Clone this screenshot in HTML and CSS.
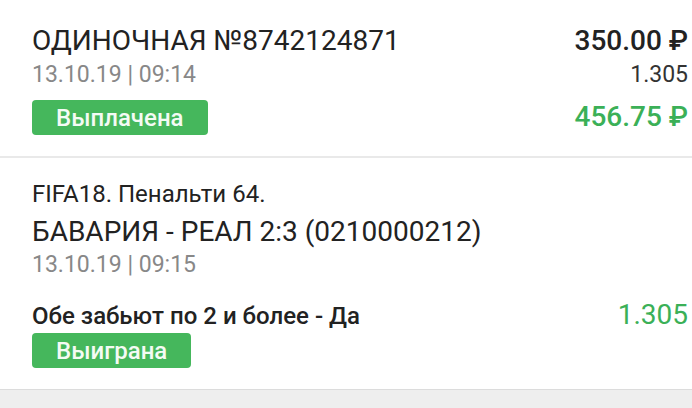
FILE: index.html
```html
<!DOCTYPE html>
<html lang="ru">
<head>
  <meta charset="UTF-8" />
  <meta name="viewport" content="width=device-width, initial-scale=1.0" />
  <title>Ставка</title>
  <link rel="stylesheet" href="styles.css">
</head>
<body>
  <div class="bet-card">
    <div class="bet-head">
      <div class="bet-title">ОДИНОЧНАЯ №8742124871</div>
      <div class="bet-amount">350.00 ₽</div>
      <div class="bet-date">13.10.19 | 09:14</div>
      <div class="bet-coef">1.305</div>
      <div class="status-wrap"><span class="status">Выплачена</span></div>
      <div class="bet-win">456.75 ₽</div>
    </div>
  </div>

  <div class="event-card">
    <div class="event-league">FIFA18. Пенальти 64.</div>
    <div class="event-match">БАВАРИЯ - РЕАЛ 2:3 (0210000212)</div>
    <div class="event-date">13.10.19 | 09:15</div>
    <div class="event-row">
      <div class="event-outcome">Обе забьют по 2 и более - Да</div>
      <div class="event-coef">1.305</div>
    </div>
    <span class="status">Выиграна</span>
  </div>
</body>
</html>
```

FILE: styles.css
```css
* {
  box-sizing: border-box;
}

body {
  margin: 0;
  font-family: Roboto, "Noto Sans", sans-serif;
  background: #eeeeee;
  color: #222;
}

.bet-card,
.event-card {
  background: #fff;
  padding: 0 4px 0 32px;
}

.bet-card {
  padding-top: 24px;
  padding-bottom: 21px;
  border-bottom: 2px solid #e9e9e9;
}

.bet-head {
  display: grid;
  grid-template-columns: 1fr auto;
  align-items: baseline;
}

.bet-title {
  font-size: 28px;
  line-height: 34px;
}

.bet-amount {
  font-size: 28px;
  line-height: 34px;
  font-weight: 500;
  text-align: right;
}

.bet-date {
  font-size: 23px;
  line-height: 34px;
  color: #888;
}

.bet-coef {
  font-size: 23px;
  line-height: 34px;
  color: #333;
  text-align: right;
}

.status-wrap {
  margin-top: 8px;
}

.status {
  display: inline-block;
  height: 35px;
  line-height: 36px;
  padding: 0 24px;
  border-radius: 4px;
  background: #45b75c;
  color: #f4fbf4;
  font-size: 24px;
  font-weight: 500;
}

.bet-win {
  font-size: 28px;
  font-weight: 500;
  color: #3bb057;
  text-align: right;
}

.event-card {
  padding-top: 21px;
  padding-bottom: 21px;
  border-bottom: 1px solid #dcdcdc;
}

.event-league {
  font-size: 24px;
  line-height: 30px;
}

.event-match {
  font-size: 28px;
  line-height: 34px;
  margin-top: 6px;
}

.event-date {
  font-size: 23px;
  line-height: 31px;
  color: #888;
}

.event-row {
  display: flex;
  justify-content: space-between;
  align-items: baseline;
  margin-top: 20px;
  margin-bottom: 2px;
}

.event-outcome {
  font-size: 24px;
  line-height: 30px;
  font-weight: 500;
}

.event-coef {
  font-size: 28px;
  line-height: 30px;
  color: #3bb057;
}
```
